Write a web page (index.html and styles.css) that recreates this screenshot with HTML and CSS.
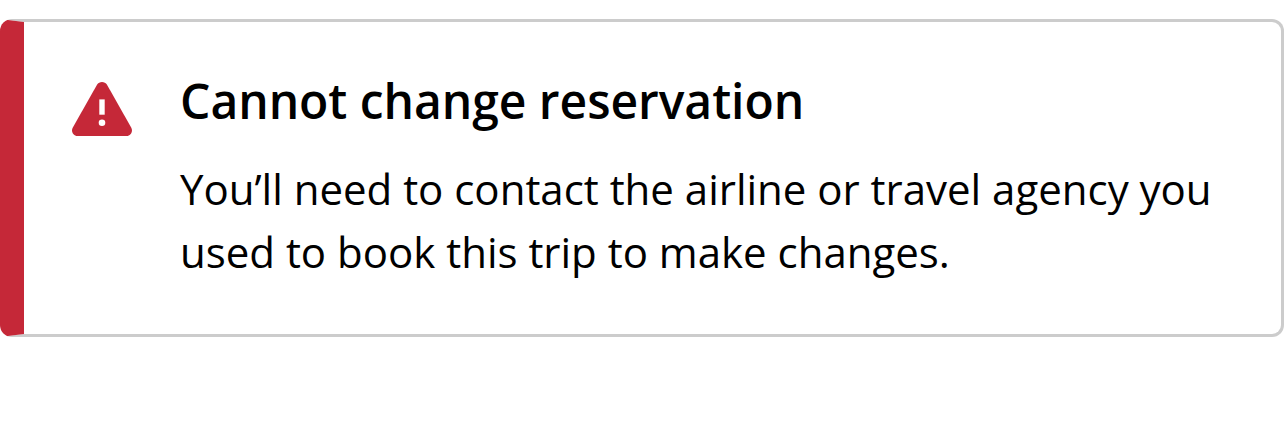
FILE: index.html
```html
<!DOCTYPE html>
<html lang="en">
<head>
  <meta charset="UTF-8" />
  <title>Cannot change reservation</title>
  <link rel="stylesheet" href="styles.css">
</head>
<body>
  <div class="alert" role="alert">
    <svg class="alert-icon" viewBox="0 0 60 54" aria-hidden="true">
      <path fill="#c52838" d="M25 2.800C27.200 -0.900 32.800 -0.900 35 2.800L59.300 45.800C61.200 49.500 58.800 54 54.500 54H5.500C1.200 54 -1.200 49.500 0.700 45.800Z" />
      <path fill="#fff" d="M27.300 17.400h5.400v15.300h-5.400z" />
      <circle fill="#fff" cx="30" cy="40.700" r="3.300" />
    </svg>
    <div class="alert-content">
      <h1 class="alert-title">Cannot change reservation</h1>
      <p class="alert-text">You’ll need to contact the airline or travel agency you used to book this trip to make changes.</p>
    </div>
  </div>
</body>
</html>
```
FILE: styles.css
```css
body {
  font-family: "Open Sans", sans-serif;
  margin: 0;
  padding-top: 19px;
  background-color: #fff;
  color: #000;
}

.alert {
  box-sizing: border-box;
  display: flex;
  height: 318px;
  padding: 46px 40px 0 48px;
  border: 3px solid #ccc;
  border-left: 24px solid #c52838;
  border-radius: 12px;
}

.alert-icon {
  flex: none;
  width: 60px;
  height: 54px;
  margin-top: 14px;
  margin-right: 48px;
}

.alert-title {
  margin: 0;
  font-size: 48px;
  font-weight: 600;
  line-height: 66px;
  letter-spacing: -0.04px;
}

.alert-text {
  margin: 23px 0 0;
  font-size: 42px;
  line-height: 63px;
  letter-spacing: -0.01px;
}
```
